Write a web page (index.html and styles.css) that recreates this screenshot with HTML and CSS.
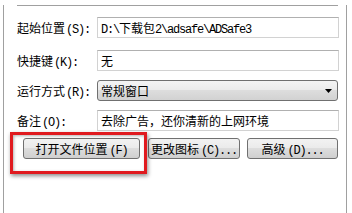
FILE: index.html
```html
<!DOCTYPE html>
<html>
<head>
<meta charset="utf-8">
<link rel="stylesheet" href="styles.css">
</head>
<body>
<div class="frame">
  <div class="sep"></div>
  <div class="row r1">
    <div class="label">起始位置<span class="m">(S):</span></div>
    <div class="field"><span class="m">D:\</span>下载包<span class="m">2\adsafe\ADSafe3</span></div>
  </div>
  <div class="row r2">
    <div class="label">快捷键<span class="m">(K):</span></div>
    <div class="field">无</div>
  </div>
  <div class="row r3">
    <div class="label">运行方式<span class="m">(R):</span></div>
    <div class="combo"><span class="combo-text">常规窗口</span><svg class="arrow" width="7" height="4" viewBox="0 0 7 4"><polygon points="0,0 7,0 3.5,4" fill="#000"/></svg></div>
  </div>
  <div class="row r4">
    <div class="label">备注<span class="m">(O):</span></div>
    <div class="field">去除广告，还你清新的上网环境</div>
  </div>
  <div class="buttons">
    <div class="btn b1">打开文件位置<span class="m">(F)</span></div>
    <div class="btn b2">更改图标<span class="m">(C)...</span></div>
    <div class="btn b3">高级<span class="m">(D)...</span></div>
  </div>
  <div class="highlight"></div>
</div>
</body>
</html>
```
FILE: styles.css
```css
html, body {
  margin: 0;
  padding: 0;
  background: #ffffff;
}
body {
  width: 352px;
  height: 213px;
  overflow: hidden;
  font-family: "Noto Sans CJK SC", "Liberation Sans", sans-serif;
  font-size: 12px;
  color: #000;
}
.frame {
  position: relative;
  margin-left: 3px;
  width: 344px;
  height: 213px;
  border-left: 1px solid #a0a0a0;
  border-right: 1px solid #a0a0a0;
  padding: 0 0 0 13px;
  box-sizing: border-box;
}
.sep {
  margin-top: 5px;
  width: 321px;
  height: 0;
  border-top: 1px solid #a0a0a0;
  border-bottom: 1px solid #ffffff;
}
.m {
  font-family: "Liberation Mono", "DejaVu Sans Mono", monospace;
  font-size: 12px;
  letter-spacing: -1.2px;
}
.row {
  display: flex;
  align-items: flex-start;
}
.r1 { margin-top: 10px; height: 33px; }
.r2 { height: 30px; }
.r3 { height: 30px; }
.r4 { height: 21px; }
.label {
  width: 80px;
  height: 21px;
  line-height: 21px;
  white-space: nowrap;
}
.label .m {
  margin-left: 1px;
}
.field {
  box-sizing: border-box;
  width: 242px;
  height: 21px;
  line-height: 19px;
  padding-left: 3px;
  border: 1px solid #d2d2d2;
  border-top-color: #b0b0b0;
  white-space: nowrap;
  overflow: hidden;
}
.combo {
  box-sizing: border-box;
  width: 241px;
  height: 21px;
  border: 1px solid #707070;
  border-radius: 3px;
  background: linear-gradient(#f4f4f4 0%, #ececec 45%, #dddddd 50%, #d2d2d2 100%);
  display: flex;
  align-items: center;
  justify-content: space-between;
  padding: 0 5px 0 3px;
}
.combo-text {
  line-height: 19px;
}
.arrow {
  display: block;
}
.buttons {
  display: flex;
  margin-top: 7px;
  margin-left: 6px;
}
.btn {
  box-sizing: border-box;
  height: 21px;
  line-height: 19px;
  border: 1px solid #707070;
  border-radius: 3px;
  background: linear-gradient(#f2f2f2 0%, #ebebeb 45%, #dddddd 50%, #cfcfcf 100%);
  text-align: center;
  white-space: nowrap;
}
.btn .m {
  margin-left: 2px;
}
.b1 { width: 117px; }
.b2 { width: 92px; margin-left: 8px; }
.b3 { width: 91px; margin-left: 7px; }
.highlight {
  position: absolute;
  left: 6px;
  top: 127px;
  width: 137px;
  height: 42px;
  box-sizing: border-box;
  border: 3px solid #e01a1f;
  box-shadow: 1px 2px 4px rgba(0,0,0,0.45), inset 1px 1px 3px rgba(0,0,0,0.3);
}
```
